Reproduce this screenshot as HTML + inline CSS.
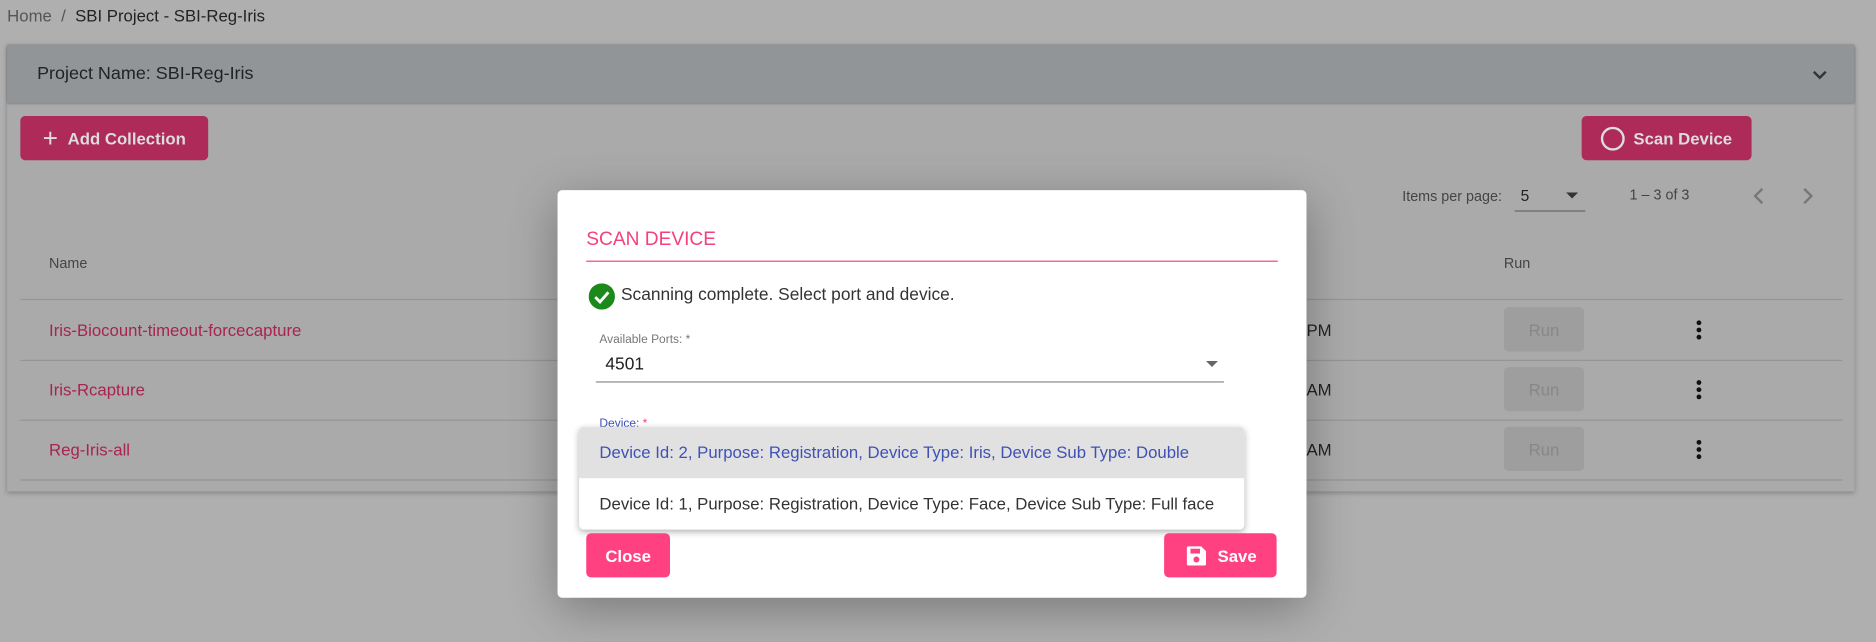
<!DOCTYPE html>
<html><head><meta charset="utf-8">
<style>
html,body{margin:0;padding:0;width:1876px;height:642px;overflow:hidden;background:#afafaf;}
#w{position:absolute;left:0;top:0;width:1568px;height:537px;transform:scale(1.19643,1.1955);transform-origin:0 0;font-family:"Liberation Sans",sans-serif;color:#222;}
.a{position:absolute;white-space:nowrap;}
.btn{position:absolute;border-radius:4px;color:#fff;font-weight:bold;font-size:14px;display:flex;align-items:center;justify-content:center;}
.line{position:absolute;height:1px;background:#959595;}
.run{position:absolute;left:1257px;width:67px;height:37px;background:#9e9e9e;border-radius:4px;color:#878787;font-size:14px;display:flex;align-items:center;justify-content:center;}
.keb{position:absolute;left:1418px;width:4px;}
.keb i{display:block;width:4px;height:4px;border-radius:2px;background:#111;margin-bottom:2px;}
.nm{position:absolute;left:41px;color:#a8244f;font-size:14px;}
</style></head><body><div id="w">
<div class="a" style="left:6px;top:5px;font-size:14px;color:#555">Home &nbsp;/&nbsp; <span style="color:#222">SBI Project - SBI-Reg-Iris</span></div>
<!-- card -->
<div class="a" style="left:6px;top:37px;width:1544px;height:374px;background:#aaaaaa;box-shadow:0 2px 4px rgba(0,0,0,.25)"></div>
<div class="a" style="left:6px;top:37px;width:1544px;height:49px;background:#929598;box-shadow:0 1px 2px rgba(0,0,0,.3)"></div>
<div class="a" style="left:31px;top:53px;font-size:15px;color:#222">Project Name: SBI-Reg-Iris</div>
<svg class="a" style="left:1514px;top:58px" width="14" height="10" viewBox="0 0 14 10"><path d="M2 2l5 5 5-5" stroke="#333" stroke-width="2" fill="none"/></svg>
<div class="btn" style="left:17px;top:97px;width:157px;height:37px;background:#ad2a59;color:#ddd"><span style="font-size:22px;font-weight:normal;margin-right:8px">+</span>Add Collection</div>
<div class="btn" style="left:1322px;top:97px;width:142px;height:37px;background:#ad2a59;color:#ddd"><span style="display:inline-block;width:16px;height:16px;border:2px solid #ddd;border-radius:50%;margin-right:7px"></span>Scan Device</div>
<div class="a" style="left:1172px;top:157px;font-size:12px;color:#444">Items per page:</div>
<div class="a" style="left:1271px;top:156px;font-size:13px;color:#222">5</div>
<div class="a" style="left:1309px;top:161px;width:0;height:0;border-left:5px solid transparent;border-right:5px solid transparent;border-top:5px solid #333"></div>
<div class="line" style="left:1266px;top:176px;width:59px;background:#666"></div>
<div class="a" style="left:1362px;top:156px;font-size:12px;color:#444">1 – 3 of 3</div>
<svg class="a" style="left:1464px;top:156px" width="12" height="16"><path d="M9 2L3 8l6 6" stroke="#777" stroke-width="2" fill="none"/></svg>
<svg class="a" style="left:1505px;top:156px" width="12" height="16"><path d="M3 2l6 6-6 6" stroke="#777" stroke-width="2" fill="none"/></svg>
<div class="a" style="left:41px;top:213px;font-size:12px;color:#444">Name</div>
<div class="a" style="left:1257px;top:213px;font-size:12px;color:#444">Run</div>
<div class="line" style="left:17px;top:250px;width:1523px"></div>
<div class="line" style="left:17px;top:301px;width:1523px"></div>
<div class="line" style="left:17px;top:351px;width:1523px"></div>
<div class="line" style="left:17px;top:401px;width:1523px"></div>
<div class="nm" style="top:268px">Iris-Biocount-timeout-forcecapture</div>
<div class="nm" style="top:318px">Iris-Rcapture</div>
<div class="nm" style="top:368px">Reg-Iris-all</div>
<div class="a" style="left:1092px;top:268px;font-size:14px">PM</div>
<div class="a" style="left:1092px;top:318px;font-size:14px">AM</div>
<div class="a" style="left:1092px;top:368px;font-size:14px">AM</div>
<div class="run" style="top:257px">Run</div>
<div class="run" style="top:307px">Run</div>
<div class="run" style="top:357px">Run</div>
<div class="keb" style="top:268px"><i></i><i></i><i></i></div>
<div class="keb" style="top:318px"><i></i><i></i><i></i></div>
<div class="keb" style="top:368px"><i></i><i></i><i></i></div>
<!-- dialog -->
<div class="a" style="left:466px;top:159px;width:626px;height:341px;background:#fff;border-radius:4px;box-shadow:0 10px 40px rgba(0,0,0,.3)"></div>
<div class="a" style="left:490px;top:192px;font-size:16px;color:#f4417d">SCAN DEVICE</div>
<div class="a" style="left:490px;top:218px;width:578px;height:1px;background:#f4417d"></div>
<svg class="a" style="left:492px;top:237px" width="22" height="22" viewBox="0 0 22 22"><circle cx="11" cy="11" r="11" fill="#1b8a1b"/><path d="M5.5 11.5l4 4 7-8" stroke="#fff" stroke-width="2.4" fill="none"/></svg>
<div class="a" style="left:519px;top:239px;font-size:14.5px;color:#333">Scanning complete. Select port and device.</div>
<div class="a" style="left:501px;top:279px;font-size:10px;color:#777">Available Ports: *</div>
<div class="a" style="left:506px;top:297px;font-size:14.5px;color:#222">4501</div>
<div class="a" style="left:1008px;top:302px;width:0;height:0;border-left:5px solid transparent;border-right:5px solid transparent;border-top:5px solid #666"></div>
<div class="a" style="left:498px;top:319px;width:525px;height:1px;background:#888"></div>
<div class="a" style="left:501px;top:349px;font-size:10px;color:#3f51b5">Device: <span style="color:#f4417d">*</span></div>
<div class="a" style="left:484px;top:357px;width:556px;height:86px;background:#fff;border-radius:4px;box-shadow:0 2px 6px rgba(0,0,0,.3);overflow:hidden">
<div style="height:43px;background:#e1e1e1;color:#3f51b5;font-size:14px;line-height:43px;padding-left:17px">Device Id: 2, Purpose: Registration, Device Type: Iris, Device Sub Type: Double</div>
<div style="height:43px;color:#333;font-size:14px;line-height:43px;padding-left:17px">Device Id: 1, Purpose: Registration, Device Type: Face, Device Sub Type: Full face</div>
</div>
<div class="btn" style="left:490px;top:446px;width:70px;height:37px;background:#ff4081">Close</div>
<div class="btn" style="left:973px;top:446px;width:94px;height:37px;background:#ff4081"><svg width="20" height="20" viewBox="0 0 20 20" style="margin-right:8px"><path d="M2 3a1 1 0 0 1 1-1h11l4 4v11a1 1 0 0 1-1 1H3a1 1 0 0 1-1-1z" fill="#fff"/><rect x="5" y="4" width="8" height="4" fill="#ff4081"/><circle cx="10" cy="13" r="2.5" fill="#ff4081"/></svg>Save</div>
</div></body></html>
